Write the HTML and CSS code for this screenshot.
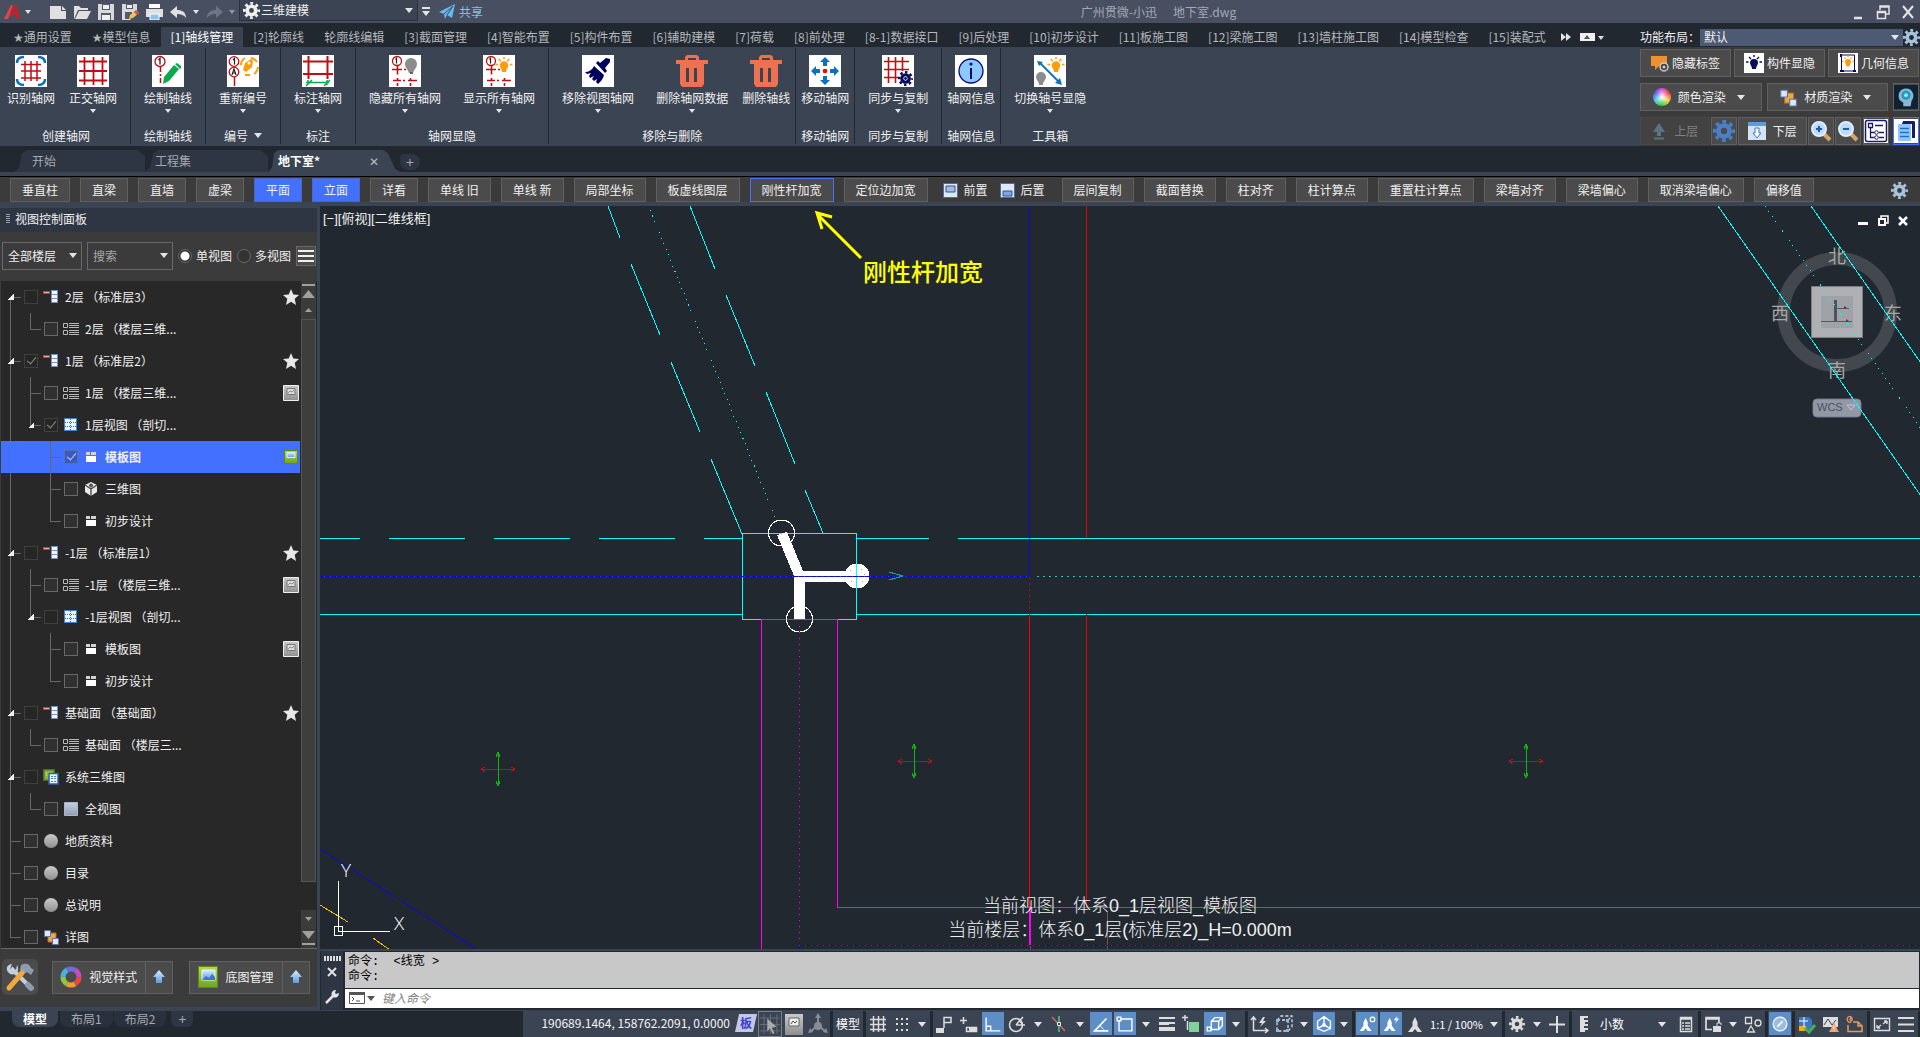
FILE: index.html
```html
<!DOCTYPE html>
<html lang="zh-CN">
<head>
    <meta charset="UTF-8">
    <meta name="viewport" content="width=device-width, initial-scale=1.0">
    <title>地下室.dwg</title>
    <link rel="stylesheet" href="styles.css">
</head>
<body>
    <!-- Shared icons -->
    <svg class="sprite" width="0" height="0" aria-hidden="true">
        <defs>
            <linearGradient id="silver" x1="0" y1="0" x2="0" y2="1"><stop offset="0" stop-color="#c9c9c9"/><stop offset="1" stop-color="#8f8f8f"/></linearGradient>
            <linearGradient id="sky" x1="0" y1="0" x2="0" y2="1"><stop offset="0" stop-color="#d8ecff"/><stop offset="1" stop-color="#5b9be0"/></linearGradient>
            <linearGradient id="leaf" x1="0" y1="0" x2="0" y2="1"><stop offset="0" stop-color="#b5d94c"/><stop offset="1" stop-color="#6fa51c"/></linearGradient>
            <linearGradient id="pane" x1="0" y1="0" x2="0" y2="1"><stop offset="0" stop-color="#c4cfdf"/><stop offset="1" stop-color="#8f9db5"/></linearGradient>
        </defs>
        <symbol id="gear" viewBox="0 0 16 16">
            <circle cx="8" cy="8" r="4" fill="none" stroke="currentColor" stroke-width="3.4"/>
            <circle cx="8" cy="8" r="6.7" fill="none" stroke="currentColor" stroke-width="2.6" stroke-dasharray="2.63" stroke-dashoffset="1.3"/>
        </symbol>
        <symbol id="floor" viewBox="0 0 16 16">
            <path d="M0 2h7v3H0z" fill="#c43f30"/><path d="M1 3h5v1H1z" fill="#f0b0a0"/>
            <path d="M8 1h7v13H8z" fill="#7d8db5"/><path d="M9 2h5v3H9zM9 6h5v3H9zM9 10h5v3H9z" fill="#f4f7ff"/>
        </symbol>
        <symbol id="list" viewBox="0 0 16 16">
            <path d="M.5 2.500h4v4h-4zM.5 9.500h4v4h-4z" fill="none" stroke="#b8b8b8"/>
            <path d="M6 2.500h10M6 4.500h10M6 6.500h10M6 9.500h10M6 11.500h10M6 13.500h10" stroke="#b8b8b8"/>
        </symbol>
        <symbol id="views" viewBox="0 0 16 16">
            <path d="M1 1h13v13H1z" fill="#3f7fd6"/><path d="M2 2h11v11H2z" fill="#eef5ff"/>
            <path d="M7.500 2v11M2 5.500h11M2 9.500h11" stroke="#2c6ac4" stroke-dasharray="1 1"/>
        </symbol>
        <symbol id="plan" viewBox="0 0 16 16">
            <path d="M3 3h4v3H3zM8 3h5v3H8z" fill="#d2d2d2"/><path d="M3 7h10v6H3z" fill="#fff"/>
        </symbol>
        <symbol id="cube" viewBox="0 0 16 16">
            <path d="M8 1l6 3v7l-6 4-6-4V4z" fill="#e8e8e8"/><path d="M8 8l6-4M8 8L2 4M8 8v7" stroke="#444" stroke-width="1.300"/><circle cx="8" cy="4.500" r="2" fill="#555"/>
        </symbol>
        <symbol id="sheets" viewBox="0 0 16 16">
            <path d="M1 1h10v10H1z" fill="#8fb044" stroke="#5f8a26" stroke-width="1.500"/>
            <path d="M3 4h6M3 6h4" stroke="#e0edb0" stroke-dasharray="1 1"/>
            <path d="M6 4.500h9V15H6z" fill="#eaf3ff" stroke="#2c62a8" stroke-width="1.500"/>
            <path d="M8 7.500h6M8 9.500h6M8 12.500h6" stroke="#4a80c8" stroke-width="1.200" stroke-dasharray="2 1"/>
        </symbol>
        <symbol id="pane-icon" viewBox="0 0 16 16"><path d="M1.500 1.500h13v13h-13z" fill="url(#pane)" stroke="#aab7cb"/></symbol>
        <symbol id="ball" viewBox="0 0 16 16"><circle cx="8" cy="8" r="7" fill="url(#silver)"/></symbol>
        <symbol id="blocks" viewBox="0 0 16 16">
            <path d="M5 4h8v9H5z" fill="#eda843" stroke="#b06e1a"/>
            <path d="M1.500 1.500h6v6h-6zM9.500 9.500h6v6h-6z" fill="#dfe8fa" stroke="#5c74aa"/>
        </symbol>
        <symbol id="star" viewBox="0 0 16 16"><path d="M8 0l2.300 5.400L16 6l-4.300 3.800L13 16l-5-3.300L3 16l1.300-6.200L0 6l5.700-.6z" fill="#e8e8e8"/></symbol>
        <symbol id="frame" viewBox="0 0 16 16">
            <path d="M.5.5h15v15H.5z" fill="url(#silver)" stroke="#eee"/><path d="M4 3.500h8v6H4z" fill="#ddd" stroke="#777"/><path d="M5 8l2-2 2 1 2-2" fill="none" stroke="#888"/>
        </symbol>
        <symbol id="frame-on" viewBox="0 0 16 16">
            <path d="M1.500 1.500h13v13h-13z" fill="url(#leaf)" stroke="#5c8c14"/><path d="M4 3.500h8v5H4z" fill="url(#sky)" stroke="#dfeeff"/>
        </symbol>
        <symbol id="up" viewBox="0 0 16 16"><path d="M8 1l6 7h-3v6H5V8H2z" fill="url(#sky)"/></symbol>
        <symbol id="bulb" viewBox="0 0 16 16">
            <path d="M8 4a4 4 0 0 1 4 4c0 2-2 3-2 6H6c0-3-2-4-2-6a4 4 0 0 1 4-4z" fill="currentColor"/>
            <path d="M8 0v2M3 2l2 2M13 2l-2 2M0 7h2.500M16 7h-2.500" stroke="currentColor" stroke-width="1.400"/>
        </symbol>
        <symbol id="grid32" viewBox="0 0 32 32">
            <path d="M2 6.500h28M2 16h28M2 25.500h28M7.500 2v28M16.500 2v28M25.500 2v28" stroke="#c00f14" stroke-width="1.800"/>
        </symbol>
        <symbol id="trash" viewBox="0 0 32 32">
            <path d="M0 5h9V2l2-2h10l2 2v3h9v4H0zM12 3v2h8V3zM4 9h24v20l-2 3H6l-2-3zm6 4v14h3V13zm8 0v14h3V13z" fill="#ee7152" fill-rule="evenodd"/>
        </symbol>
        <symbol id="axis" viewBox="0 0 32 32">
            <circle cx="8" cy="6" r="4.500" fill="#fff" stroke="#c00f14" stroke-width="1.300"/>
            <path d="M7.500 8.500V3.500L6.500 4.500" stroke="#222" fill="none" stroke-width="1.200"/>
            <path d="M8.500 10.500v9M3 14.500h10M15 14.500h2M19 14.500h2M4 25.500h8M14 25.500h2M19 25.500h9M8.500 23v3M8.500 28v3M21.500 23v3M21.500 28v3" stroke="#c00f14" stroke-width="1.600"/>
        </symbol>
        <symbol id="annot" viewBox="0 0 16 16">
            <path d="M8 0l2.500 5v4l4.500 6h-4.500L8 12l-2.500 3H1l4.500-6V5z" fill="currentColor"/>
        </symbol>
    </svg>

    <!-- Title bar -->
    <header class="titlebar">
        <nav class="quick" aria-label="快速访问">
            <button class="logo" aria-label="应用程序"><svg width="17" height="18" viewBox="0 0 17 18"><path d="M0 16L7 2h6l3 13-4 1-1-4H7l-3 4z" fill="#b5282c"/><path d="M8 9h3l-1-4z" fill="#474f61"/><path d="M0 16L7 2h2L4 16z" fill="#d8484c"/></svg></button>
            <button class="caret" aria-label="菜单"></button>
            <button class="q" aria-label="新建"><svg width="17" height="16" viewBox="0 0 17 16"><path d="M0 2h11v5h5v8H0zM12 2l4 4h-4z" fill="#e0e0e0"/></svg></button>
            <button class="q" aria-label="打开"><svg width="17" height="16" viewBox="0 0 17 16"><path d="M0 15V2h5l2 2h7v2H4L1 13z" fill="#e0e0e0"/><path d="M5 7h12l-4 8H1z" fill="#e0e0e0"/></svg></button>
            <button class="q" aria-label="保存"><svg width="17" height="16" viewBox="0 0 17 16"><path d="M0 0h16v16H0z" fill="#d9d9d9"/><path d="M4 0h8v6H4zM3 9h10v7H3z" fill="#535b6c"/><path d="M5 1h6v4H5zM4 11h8v5H4z" fill="#eee"/></svg></button>
            <button class="q" aria-label="另存为"><svg width="17" height="16" viewBox="0 0 17 16"><path d="M0 0h15v9l-7 7H0z" fill="#d9d9d9"/><path d="M4 0h7v5H4zM3 8h7v7H3z" fill="#535b6c"/><path d="M5 1h5v3H5z" fill="#eee"/><path d="M7 15l1-4 6-5 3 3-6 5z" fill="#e9c35c"/><path d="M14 6l3 3-2 2-3-3z" fill="#d05050"/></svg></button>
            <button class="q" aria-label="打印"><svg width="17" height="16" viewBox="0 0 17 16"><path d="M3 0h11v4H3z" fill="#fff"/><path d="M0 5h17v8H0z" fill="#e0e0e0"/><path d="M4 10h9v6H4z" fill="#8cc4f0" stroke="#fff"/></svg></button>
            <button class="q" aria-label="放弃"><svg width="17" height="16" viewBox="0 0 17 16"><path d="M0 8l7-6v4c5 0 9 2 9 8-2-3-5-4-9-4v4z" fill="#e0e0e0"/></svg></button>
            <button class="caret" aria-label="放弃列表"></button>
            <button class="q" aria-label="重做"><svg width="17" height="16" viewBox="0 0 17 16"><path d="M17 8l-7-6v4C5 6 1 8 1 14c2-3 5-4 9-4v4z" fill="#6d7584"/></svg></button>
            <button class="caret dim" aria-label="重做列表"></button>
        </nav>
        <label class="select workspace">
            <svg width="17" height="17"><use href="#gear"/></svg>
            <select aria-label="工作空间"><option>三维建模</option></select>
        </label>
        <button class="more" aria-label="自定义"><svg width="8" height="10" viewBox="0 0 8 10"><path d="M0 1h8" stroke="#e4e4e4" stroke-width="2"/><path d="M0 4h8l-4 5z" fill="#e4e4e4"/></svg></button>
        <a class="share" href="#"><svg width="16" height="15" viewBox="0 0 16 15"><path d="M0 8L16 0l-3 14-5-3-2 4-1-5z" fill="#6cb6ee"/><path d="M5 10l9-8-6 9" fill="none" stroke="#474f61"/></svg>共享</a>
        <div class="doc-title"><span>广州贯微-小迅</span><span>地下室.dwg</span></div>
        <div class="win-buttons">
            <button aria-label="最小化"><svg width="16" height="16" viewBox="0 0 16 16"><path d="M4 14h8" stroke="#e4e4e4" stroke-width="2.500"/></svg></button>
            <button aria-label="还原"><svg width="16" height="16" viewBox="0 0 16 16"><path d="M5 6V2h9v8h-3M5 3h9" stroke="#e4e4e4" stroke-width="1.500" fill="none"/><path d="M2.500 7.500h8v7h-8zM2 8.500h9" stroke="#e4e4e4" stroke-width="1.500" fill="none"/></svg></button>
            <button aria-label="关闭"><svg width="16" height="16" viewBox="0 0 16 16"><path d="M3 2l10 12M13 2L3 14" stroke="#e4e4e4" stroke-width="2"/></svg></button>
        </div>
    </header>

    <!-- Ribbon -->
    <div class="ribbon">
        <div class="ribbon-main">
            <nav class="tabs">
                <a href="#"><span class="st">★</span>通用设置</a>
                <a href="#"><span class="st">★</span>模型信息</a>
                <a href="#" class="active">[1]轴线管理</a>
                <a href="#">[2]轮廓线</a>
                <a href="#">轮廓线编辑</a>
                <a href="#">[3]截面管理</a>
                <a href="#">[4]智能布置</a>
                <a href="#">[5]构件布置</a>
                <a href="#">[6]辅助建模</a>
                <a href="#">[7]荷载</a>
                <a href="#">[8]前处理</a>
                <a href="#">[8-1]数据接口</a>
                <a href="#">[9]后处理</a>
                <a href="#">[10]初步设计</a>
                <a href="#">[11]板施工图</a>
                <a href="#">[12]梁施工图</a>
                <a href="#">[13]墙柱施工图</a>
                <a href="#">[14]模型检查</a>
                <a href="#">[15]装配式</a>
                <button class="tabs-more" aria-label="更多"><svg width="44" height="10" viewBox="0 0 44 10"><path d="M0 1l5 4-5 4zM5 1l5 4-5 4z" fill="#e4e4e4"/><path d="M19 1h15v8H19z" fill="#f0f0f0"/><path d="M23 7l3-4 3 4z" fill="#555"/><path d="M37 4h6l-3 4z" fill="#ddd"/></svg></button>
            </nav>
            <div class="groups">
                <section class="group">
                    <div class="tools">
                        <button class="tool"><svg width="32" height="32" viewBox="0 0 32 32"><path d="M0 0h32v32H0z" fill="#fff"/><path d="M2 8q0-6 7-6M23 2q7 0 7 6M2 24q0 6 7 6M23 30q7 0 7-6" fill="none" stroke="#0b6fc2" stroke-width="2.500"/><path d="M6 9.500h20M6 16h20M6 23h20M10 6v20M16 6v20M22 6v20" stroke="#c00f14" stroke-width="1.500"/></svg>识别轴网</button>
                        <button class="tool drop"><svg width="32" height="32" viewBox="0 0 32 32"><path d="M0 0h32v32H0z" fill="#fff"/><use href="#grid32"/></svg>正交轴网</button>
                    </div>
                    <h3>创建轴网</h3>
                </section>
                <section class="group">
                    <div class="tools">
                        <button class="tool drop"><svg width="32" height="32" viewBox="0 0 32 32"><path d="M0 0h32v32H0z" fill="#fff"/><circle cx="8" cy="6.500" r="5" fill="#fff" stroke="#c00f14" stroke-width="1.300"/><path d="M6.500 5L8 3.500V9.500" stroke="#222" fill="none" stroke-width="1.300"/><path d="M8.500 12v18" stroke="#c00f14" stroke-width="1.500" stroke-dasharray="5 2 2 2"/><path d="M11 29l1-7 10-12 5 4-10 12z" fill="#0ea84c"/><path d="M23 9l2-1 4 3v2l-1 1z" fill="#0ea84c"/></svg>绘制轴线</button>
                    </div>
                    <h3>绘制轴线</h3>
                </section>
                <section class="group">
                    <div class="tools">
                        <button class="tool drop"><svg width="32" height="32" viewBox="0 0 32 32"><path d="M0 0h32v32H0z" fill="#fff"/><circle cx="7" cy="6.500" r="4.800" fill="#fff" stroke="#c00f14" stroke-width="1.300"/><circle cx="7" cy="17" r="4.800" fill="#fff" stroke="#c00f14" stroke-width="1.300"/><path d="M6 5l1.500-1.500V9.500M5 20l2-6 2 6M5.500 18h3" fill="none" stroke="#222" stroke-width="1.200"/><path d="M7.500 22v9" stroke="#c00f14" stroke-width="1.500"/><path d="M16 15l2-7 6-4 2 2-1 6-6 5z" fill="#ff9c0a"/><path d="M14 10a8 8 0 0 1 4-7M24 3a9 9 0 0 1 6 4M31 12a9 9 0 0 1-4 7M23 20h-5" fill="none" stroke="#ff9c0a" stroke-width="2"/><circle cx="22" cy="8" r="1.500" fill="#fff"/></svg>重新编号</button>
                    </div>
                    <h3>编号 <i class="tri"></i></h3>
                </section>
                <section class="group">
                    <div class="tools">
                        <button class="tool drop"><svg width="32" height="32" viewBox="0 0 32 32"><path d="M0 0h32v32H0z" fill="#fff"/><path d="M1 6.500h30M1 19h30M6.500 1v23M25.500 1v23" stroke="#c00f14" stroke-width="2"/><path d="M4 27.500h23" stroke="#0ea84c" stroke-width="1.500"/><path d="M4 31l6-6M6 25v5M22 31l6-6M25 25v5" stroke="#0ea84c" stroke-width="1.500"/></svg>标注轴网</button>
                    </div>
                    <h3>标注</h3>
                </section>
                <section class="group">
                    <div class="tools">
                        <button class="tool drop"><svg width="32" height="32" viewBox="0 0 32 32"><path d="M0 0h32v32H0z" fill="#fff"/><use href="#axis"/><path d="M22 3a6 6 0 0 1 6 6c0 4-3 5-4 9h-4c-1-4-4-5-4-9a6 6 0 0 1 6-6z" fill="#8c8c8c"/><path d="M21 18h3" stroke="#666" stroke-width="2"/></svg>隐藏所有轴网</button>
                        <button class="tool drop"><svg width="32" height="32" viewBox="0 0 32 32"><path d="M0 0h32v32H0z" fill="#fff"/><use href="#axis"/><g color="#ff9c0a"><use href="#bulb" x="12" y="2" width="18" height="17"/></g></svg>显示所有轴网</button>
                    </div>
                    <h3>轴网显隐</h3>
                </section>
                <section class="group">
                    <div class="tools">
                        <button class="tool drop"><svg width="32" height="32" viewBox="0 0 32 32"><path d="M0 0h32v32H0z" fill="#fff"/><path d="M18 8l6-5 4 1v3l-5 6 2 3-2 2-9-10 2-2z" fill="#00005c"/><path d="M12 11l10 9c-1 4-3 6-6 9l-2-2 1-3-3 2-2-2 2-3-4 2-1-2 2-3-4 1-2-2c4 0 7-2 9-6z" fill="#00005c"/></svg>移除视图轴网</button>
                        <button class="tool drop"><svg width="32" height="32"><use href="#trash"/></svg>删除轴网数据</button>
                        <button class="tool"><svg width="32" height="32"><use href="#trash"/></svg>删除轴线</button>
                    </div>
                    <h3>移除与删除</h3>
                </section>
                <section class="group">
                    <div class="tools">
                        <button class="tool"><svg width="32" height="32" viewBox="0 0 32 32"><path d="M0 0h32v32H0z" fill="#fff"/><path d="M16 2l5 5h-3v4h-4V7h-3zM16 30l5-5h-3v-4h-4v4h-3zM2 16l5-5v3h4v4H7v3zM30 16l-5-5v3h-4v4h4v3z" fill="#0b6fc2"/><circle cx="16" cy="16" r="2.300" fill="#f00"/></svg>移动轴网</button>
                    </div>
                    <h3>移动轴网</h3>
                </section>
                <section class="group">
                    <div class="tools">
                        <button class="tool drop"><svg width="32" height="32" viewBox="0 0 32 32"><path d="M0 0h32v32H0z" fill="#fff"/><path d="M2 6.500h25M2 14.500h25M2 22.500h14M6.500 2v26M13.500 2v26M20.500 2v14" stroke="#c00f14" stroke-width="1.600"/><g color="#0b0b5c"><use href="#gear" x="16" y="16" width="15" height="15"/></g><circle cx="23.500" cy="23.500" r="1.400" fill="#0b0b5c"/></svg>同步与复制</button>
                    </div>
                    <h3>同步与复制</h3>
                </section>
                <section class="group">
                    <div class="tools">
                        <button class="tool"><svg width="32" height="32" viewBox="0 0 32 32"><path d="M0 0h32v32H0z" fill="#fff"/><circle cx="16" cy="16" r="12" fill="#8cc8fc" stroke="#0b0b7c" stroke-width="1.300"/><path d="M16 13v11" stroke="#0b0b5c" stroke-width="2"/><circle cx="16" cy="9" r="1.600" fill="#0b0b5c"/></svg>轴网信息</button>
                    </div>
                    <h3>轴网信息</h3>
                </section>
                <section class="group last">
                    <div class="tools">
                        <button class="tool drop"><svg width="32" height="32" viewBox="0 0 32 32"><path d="M0 0h32v32H0z" fill="#fff"/><path d="M6 8l20 20" stroke="#0b6fc2" stroke-width="1.800"/><path d="M3 6l6 1-4 4zM28 30l-7-2 5-5z" fill="#0b6fc2"/><g color="#ff9c0a"><use href="#bulb" x="13" y="2" width="18" height="17"/></g><path d="M7 17a5 5 0 0 1 5 5c0 3-3 4-3 8H5c0-4-3-5-3-8a5 5 0 0 1 5-5z" fill="#8c8c8c"/></svg>切换轴号显隐</button>
                    </div>
                    <h3>工具箱</h3>
                </section>
            </div>
        </div>

        <!-- Function layout panel -->
        <aside class="layout-panel">
            <div class="layout-head">
                <label for="layoutSelect">功能布局：</label>
                <span class="select"><select id="layoutSelect"><option>默认</option></select></span>
                <button class="bare steel" aria-label="布局设置"><svg width="17" height="17"><use href="#gear"/></svg></button>
            </div>
            <div class="layout-body">
                <div class="lrow">
                    <button><svg width="18" height="18" viewBox="0 0 18 18"><path d="M0 2h16v10H8l-4 4v-4H0z" fill="#f09030"/><circle cx="13" cy="13" r="4" fill="#444" stroke="#ccc" stroke-width="1.500"/><circle cx="13" cy="13" r="1.500" fill="#ccc"/></svg>隐藏标签</button>
                    <button><svg width="20" height="20" viewBox="0 0 20 20"><path d="M0 0h20v20H0z" fill="#fff"/><g color="#0b0b5c"><use href="#bulb" x="2" y="2" width="16" height="16"/></g></svg>构件显隐</button>
                    <button><svg width="20" height="20" viewBox="0 0 20 20"><path d="M0 0h20v20H0z" fill="#fff"/><path d="M3.500 2v16h13V2z" fill="none" stroke="#0b0b5c"/><path d="M2 18h4M15 18h3M3 1v3" stroke="#0b0b5c" stroke-width="2"/><g color="#ff9c0a"><use href="#bulb" x="4" y="3" width="12" height="12"/></g></svg>几何信息</button>
                </div>
                <div class="lrow wide">
                    <button class="drop"><i class="wheel"></i>颜色渲染</button>
                    <button class="drop"><svg width="18" height="19"><use href="#blocks"/></svg>材质渲染</button>
                    <button class="sq" aria-label="智能助手"><svg width="24" height="26" viewBox="0 0 26 26"><path d="M0 0h26v26H0z" fill="#0d2233"/><path d="M5 12a8 8 0 1 1 14 5l-1 6h-8v-4C7 18 5 16 5 12z" fill="#8fb6cc"/><circle cx="13" cy="11" r="5" fill="#1d9cc8"/><circle cx="13" cy="11" r="2" fill="#9df0ff"/></svg></button>
                </div>
                <div class="lrow tight">
                    <button class="lv off" disabled><svg width="16" height="18" viewBox="0 0 16 18"><path d="M8 1l6 9h-4v4H6v-4H2z" fill="#5c7480"/><path d="M3 16.500h10" stroke="#5c7480" stroke-width="2"/></svg>上层</button>
                    <button class="sq blue" aria-label="层设置"><svg width="22" height="22"><use href="#gear"/></svg></button>
                    <button class="lv"><svg width="18" height="18" viewBox="0 0 18 18"><path d="M0 0h18v18H0z" fill="#d4e4f6"/><path d="M0 0h18v4H0z" fill="#5b9be0"/><path d="M9 16l-4-5h2V6h4v5h2z" fill="#fff" stroke="#3f78c0"/></svg>下层</button>
                    <button class="sq" aria-label="放大"><svg width="22" height="22" viewBox="0 0 22 22"><path d="M14 14l6 6" stroke="#d8a468" stroke-width="4"/><circle cx="9" cy="9" r="7" fill="#b8dcff" stroke="#e4ecf4" stroke-width="2"/><path d="M9 6v6M6 9h6" stroke="#2456b0" stroke-width="2"/></svg></button>
                    <button class="sq" aria-label="缩小"><svg width="22" height="22" viewBox="0 0 22 22"><path d="M14 14l6 6" stroke="#d8a468" stroke-width="4"/><circle cx="9" cy="9" r="7" fill="#b8dcff" stroke="#e4ecf4" stroke-width="2"/><path d="M6 9h6" stroke="#2456b0" stroke-width="2"/></svg></button>
                    <button class="sq white" aria-label="树形"><svg width="24" height="24" viewBox="0 0 24 24"><path d="M0 0h24v24H0z" fill="#fff"/><rect x="1.500" y="1.500" width="21" height="21" rx="2" fill="none" stroke="#1a1a66" stroke-width="1.500"/><path d="M4.500 4.500h4v4h-4zM11 6.500h8M6.500 9v9.500h4M6.500 13.500h4M15 13.500h5M15 18.500h5" fill="none" stroke="#1a1a66" stroke-width="1.300"/><circle cx="12.500" cy="13.500" r="1.800" fill="none" stroke="#1a1a66"/><circle cx="12.500" cy="18.500" r="1.800" fill="none" stroke="#1a1a66"/></svg></button>
                    <button class="sq white on" aria-label="文档"><svg width="24" height="24" viewBox="0 0 24 24"><path d="M0 0h24v24H0z" fill="#fff"/><path d="M9 2h11l1 1v16h-3V5H8z" fill="#1a1a66"/><rect x="4" y="5" width="13" height="17" rx="1" fill="#8cc8fc"/><path d="M6 9.500h9M6 13.500h9M6 17.500h9" stroke="#1f6fc0" stroke-width="1.300"/></svg></button>
                </div>
            </div>
        </aside>
    </div>

    <!-- Open drawings -->
    <nav class="file-tabs">
        <a href="#" class="first">开始</a>
        <a href="#">工程集</a>
        <a href="#" class="active">地下室*<span class="x">✕</span></a>
        <button aria-label="新建图形">+</button>
    </nav>

    <!-- Component toolbar -->
    <div class="toolbar">
        <button>垂直柱</button>
        <button>直梁</button>
        <button>直墙</button>
        <button>虚梁</button>
        <button class="on">平面</button>
        <button class="on">立面</button>
        <button>详看</button>
        <button>单线 旧</button>
        <button>单线 新</button>
        <button>局部坐标</button>
        <button>板虚线图层</button>
        <button class="focus">刚性杆加宽</button>
        <button>定位边加宽</button>
        <div class="order">
            <button><svg width="15" height="15" viewBox="0 0 15 15"><path d="M.5.5h14v14H.5z" fill="#dfe8f8" stroke="#51699c"/><path d="M3 3h9v6H3z" fill="#a6bce0" stroke="#31548c"/></svg>前置</button>
            <button><svg width="15" height="15" viewBox="0 0 15 15"><path d="M.5.5h14v14H.5z" fill="#dfe8f8" stroke="#51699c"/><path d="M3 8h9v5H3z" fill="#7ea6e0" stroke="#31548c"/></svg>后置</button>
        </div>
        <button>层间复制</button>
        <button>截面替换</button>
        <button>柱对齐</button>
        <button>柱计算点</button>
        <button>重置柱计算点</button>
        <button>梁墙对齐</button>
        <button>梁墙偏心</button>
        <button>取消梁墙偏心</button>
        <button>偏移值</button>
        <button class="bare steel" aria-label="工具栏设置"><svg width="17" height="17"><use href="#gear"/></svg></button>
    </div>

    <main class="workspace-area">
        <!-- View control panel -->
        <aside class="side">
            <h2>视图控制面板</h2>
            <div class="filters">
                <span class="select floor"><select aria-label="楼层"><option>全部楼层</option></select></span>
                <span class="select search"><input type="text" aria-label="搜索" placeholder="搜索"></span>
                <label><input type="radio" name="viewMode" checked>单视图</label>
                <label><input type="radio" name="viewMode">多视图</label>
                <button class="burger" aria-label="菜单"></button>
            </div>
            <div class="tree-box">
                <ul class="tree">
                    <li>
                        <div class="row"><button class="exp" aria-label="折叠"></button><input type="checkbox" id="n1" class="faint"><svg><use href="#floor"/></svg><label for="n1">2层 （标准层3）</label><svg class="mark"><use href="#star"/></svg></div>
                        <ul>
                            <li><div class="row"><input type="checkbox" id="n2"><svg><use href="#list"/></svg><label for="n2">2层 （楼层三维...</label></div></li>
                        </ul>
                    </li>
                    <li>
                        <div class="row"><button class="exp" aria-label="折叠"></button><input type="checkbox" id="n3" class="faint" checked><svg><use href="#floor"/></svg><label for="n3">1层 （标准层2）</label><svg class="mark"><use href="#star"/></svg></div>
                        <ul>
                            <li><div class="row"><input type="checkbox" id="n4"><svg><use href="#list"/></svg><label for="n4">1层 （楼层三维...</label><svg class="mark"><use href="#frame"/></svg></div></li>
                            <li>
                                <div class="row"><button class="exp" aria-label="折叠"></button><input type="checkbox" id="n5" class="faint" checked><svg><use href="#views"/></svg><label for="n5">1层视图 （剖切...</label></div>
                                <ul>
                                    <li><div class="row selected"><input type="checkbox" id="n6" checked><svg><use href="#plan"/></svg><label for="n6">模板图</label><svg class="mark"><use href="#frame-on"/></svg></div></li>
                                    <li><div class="row"><input type="checkbox" id="n7"><svg><use href="#cube"/></svg><label for="n7">三维图</label></div></li>
                                    <li><div class="row"><input type="checkbox" id="n8"><svg><use href="#plan"/></svg><label for="n8">初步设计</label></div></li>
                                </ul>
                            </li>
                        </ul>
                    </li>
                    <li>
                        <div class="row"><button class="exp" aria-label="折叠"></button><input type="checkbox" id="n9" class="faint"><svg><use href="#floor"/></svg><label for="n9">-1层 （标准层1）</label><svg class="mark"><use href="#star"/></svg></div>
                        <ul>
                            <li><div class="row"><input type="checkbox" id="n10"><svg><use href="#list"/></svg><label for="n10">-1层 （楼层三维...</label><svg class="mark"><use href="#frame"/></svg></div></li>
                            <li>
                                <div class="row"><button class="exp" aria-label="折叠"></button><input type="checkbox" id="n11" class="faint"><svg><use href="#views"/></svg><label for="n11">-1层视图 （剖切...</label></div>
                                <ul>
                                    <li><div class="row"><input type="checkbox" id="n12"><svg><use href="#plan"/></svg><label for="n12">模板图</label><svg class="mark"><use href="#frame"/></svg></div></li>
                                    <li><div class="row"><input type="checkbox" id="n13"><svg><use href="#plan"/></svg><label for="n13">初步设计</label></div></li>
                                </ul>
                            </li>
                        </ul>
                    </li>
                    <li>
                        <div class="row"><button class="exp" aria-label="折叠"></button><input type="checkbox" id="n14" class="faint"><svg><use href="#floor"/></svg><label for="n14">基础面 （基础面）</label><svg class="mark"><use href="#star"/></svg></div>
                        <ul>
                            <li><div class="row"><input type="checkbox" id="n15"><svg><use href="#list"/></svg><label for="n15">基础面 （楼层三...</label></div></li>
                        </ul>
                    </li>
                    <li>
                        <div class="row"><button class="exp" aria-label="折叠"></button><input type="checkbox" id="n16" class="faint"><svg><use href="#sheets"/></svg><label for="n16">系统三维图</label></div>
                        <ul>
                            <li><div class="row"><input type="checkbox" id="n17"><svg><use href="#pane-icon"/></svg><label for="n17">全视图</label></div></li>
                        </ul>
                    </li>
                    <li><div class="row"><input type="checkbox" id="n18"><svg><use href="#ball"/></svg><label for="n18">地质资料</label></div></li>
                    <li><div class="row"><input type="checkbox" id="n19"><svg><use href="#ball"/></svg><label for="n19">目录</label></div></li>
                    <li><div class="row"><input type="checkbox" id="n20"><svg><use href="#ball"/></svg><label for="n20">总说明</label></div></li>
                    <li><div class="row"><input type="checkbox" id="n21"><svg><use href="#blocks"/></svg><label for="n21">详图</label></div></li>
                </ul>
                <div class="scroll">
                    <svg width="15" height="38" viewBox="0 0 15 38"><path d="M1 4h13" stroke="#a0a0a0" stroke-width="2"/><path d="M1 17l6.500-8 6.500 8zM4 31l3.500-4 3.500 4z" fill="#a0a0a0"/></svg>
                    <div class="thumb"></div>
                    <svg width="15" height="38" viewBox="0 0 15 38"><path d="M1 34h13" stroke="#a0a0a0" stroke-width="2"/><path d="M1 21l6.500 8 6.500-8zM4 7l3.500 4 3.500-4z" fill="#a0a0a0"/></svg>
                </div>
            </div>
            <div class="side-foot">
                <button class="wrench" aria-label="工具"><svg width="32" height="32" viewBox="0 0 32 32"><path d="M7 7l18 18" stroke="#c4cede" stroke-width="4"/><path d="M3 6a6 6 0 0 0 8 7 6 6 0 0 0 2-9l-1 5-4 1-2-2 2-5a6 6 0 0 0-5 3z" fill="#c4cede"/><path d="M17 4c6-3 9 0 10 3l3 2-3 5-4-3-3 2-4-4z" fill="#8e9cb0"/><path d="M18 12L5 27" stroke="#f0a840" stroke-width="5" stroke-linecap="round"/><path d="M24 24l3 3" stroke="#8e9cb0" stroke-width="6" stroke-linecap="round"/></svg></button>
                <div class="split">
                    <button><svg width="22" height="22" viewBox="0 0 22 22"><g fill="none" stroke-width="5"><circle cx="11" cy="11" r="8" stroke="#e8483c" stroke-dasharray="8.400 41.900"/><circle cx="11" cy="11" r="8" stroke="#f29a38" stroke-dasharray="8.400 41.900" stroke-dashoffset="-8.400"/><circle cx="11" cy="11" r="8" stroke="#8cc83c" stroke-dasharray="8.400 41.900" stroke-dashoffset="-16.800"/><circle cx="11" cy="11" r="8" stroke="#4cb0e0" stroke-dasharray="8.400 41.900" stroke-dashoffset="-25.100"/><circle cx="11" cy="11" r="8" stroke="#6c6ce0" stroke-dasharray="8.400 41.900" stroke-dashoffset="-33.500"/><circle cx="11" cy="11" r="8" stroke="#c050c0" stroke-dasharray="8.400 41.900" stroke-dashoffset="-41.900"/></g></svg>视觉样式</button>
                    <button class="up" aria-label="展开"><svg width="16" height="16"><use href="#up"/></svg></button>
                </div>
                <div class="split">
                    <button><svg width="20" height="22" viewBox="0 0 20 22"><path d="M.5.5h19v21H.5z" fill="url(#leaf)" stroke="#5c8c14"/><path d="M4 4h13v10H4z" fill="url(#sky)" stroke="#eef6ff"/><path d="M4 14l4-4 3 2 3-4 3 3v3z" fill="#3f78c0"/></svg>底图管理</button>
                    <button class="up" aria-label="展开"><svg width="16" height="16"><use href="#up"/></svg></button>
                </div>
            </div>
        </aside>

        <div class="stage">
            <div class="viewport">
                <!-- View cube -->
                <svg class="cube" width="160" height="240" viewBox="0 0 160 240">
                    <circle cx="77" cy="106" r="53.500" fill="none" stroke="#43484f" stroke-width="13"/>
                    <path d="M51.500 80.500h51v51h-51z" fill="#aeb0b3" stroke="#7d7f7c"/>
                    <path d="M61 90h32v32H61z" fill="#9fa3a8"/>
                    <path d="M75.500 94v21" stroke="#50545a" stroke-width="3"/>
                    <path d="M61 115.500h31M77 102.500h12" stroke="#565a60"/>
                    <path d="M89 115l-3-2v3zM87 102l-3-2v3z" fill="#444"/>
                    <g class="compass"><text x="77" y="57">北</text><text x="77" y="171">南</text><text x="20" y="114">西</text><text x="133" y="114">东</text></g>
                    <rect x="53" y="193" width="48" height="18" rx="4" fill="#9298a6" stroke="#747b89"/>
                    <text class="wcs" x="57" y="205">WCS</text>
                    <path d="M87 199h8l-4 5z" fill="none" stroke="#c4c8d0"/>
                </svg>

                <!-- Drawing, in window coordinates -->
                <svg class="drawing" width="100%" height="100%">
                    <g transform="translate(-320 -206)" fill="none" stroke-width="1" shape-rendering="crispEdges">
                        <g stroke="#0ff">
                            <path d="M608 206L620 238M631 264L660 335M671 362L700 432M711 459L742 534"/>
                            <path d="M690 206L715 269M726 295L755 366M766 392L795 464M805 490L823 533"/>
                            <path d="M650 210L779 527" stroke-dasharray="1 5"/>
                            <path d="M320 538.500h40M389 538.500h76M494 538.500h76M599 538.500h76M704 538.500h38M856 538.500h73M958 538.500h4000"/>
                            <path d="M320 614.500h422M856 614.500h4000"/>
                            <path d="M742.500 533.500h114v86h-114z"/>
                            <path d="M1718 206l404 577M1811 206l404 577"/>
                            <path d="M1765 206l404 577" stroke-dasharray="1 5"/>
                        </g>
                        <path d="M1037 576.500h3000" stroke="#2cc0c0" stroke-dasharray="2 4"/>
                        <path d="M1086.500 206v332M1086.500 614v293" stroke="#d80808"/>
                        <path d="M1029.500 614v294" stroke="#f00"/>
                        <path d="M1029.500 577v37" stroke="#c00a0a" stroke-dasharray="2 4"/>
                        <path d="M1030.500 945v5M1107.500 912v38" stroke="#7a5050"/>
                        <g stroke="#f0f">
                            <path d="M761.500 950V619.500h76V907.500h4000"/>
                            <path d="M799.500 626v314" stroke-dasharray="1 5"/>
                            <path d="M1029.500 908v38" stroke-width="2"/>
                        </g>
                        <path d="M777 535l10-3 16 39h44v11h-42v37h-11v-43z" fill="#fff"/>
                        <circle cx="857" cy="576" r="12.500" fill="#fff"/>
                        <circle cx="857" cy="576" r="8" stroke="#f08080" stroke-dasharray="1 5"/>
                        <circle cx="781.500" cy="533" r="13" stroke="#fff"/>
                        <circle cx="799.500" cy="619" r="13" stroke="#fff"/>
                        <path d="M856.500 560v34" stroke="#0ff"/>
                        <g stroke="#0c0cc8">
                            <path d="M320 576.500h709"/>
                            <path d="M1029.500 206v370M799.500 950v-4.500h4000"/>
                            <path d="M320 849L478 950"/>
                        </g>
                        <path d="M324 576.500h705M799 945.500h4000" stroke="#3070ff" stroke-dasharray="1 5" opacity=".6"/>
                        <path d="M889 572l14 4-14 4" stroke="#1c9c9c"/>
                        <path d="M320 905l28 17M373 938l17 12" stroke="#ffc000"/>
                        <path d="M481 769.500h34M485 767l-4 2 4 3M511 767l4 2-4 3M898 761.500h34M902 759l-4 2 4 3M928 759l4 2-4 3M1509 761.500h34M1513 759l-4 2 4 3M1539 759l4 2-4 3" stroke="#c80c0c"/>
                        <path d="M498.500 752v34M496 757l2-5 2 5M496 781l2 5 2-5M914.500 744v34M912 749l2-5 2 5M912 773l2 5 2-5M1526.500 744v34M1524 749l2-5 2 5M1524 773l2 5 2-5" stroke="#0cb80c"/>
                        <path d="M338.500 881v50.500h51M334.500 926.500h8v9h-8z" stroke="#fff"/>
                        <g class="ucs"><text x="399" y="930">X</text><text x="346" y="877">Y</text></g>
                        <path d="M861 258L817 214M832 217l-15-4 5 16" stroke="#ff0" stroke-width="3" shape-rendering="auto"/>
                        <text class="note" x="863" y="281">刚性杆加宽</text>
                    </g>
                </svg>

                <div class="view-label">[−][俯视][二维线框]</div>
                <div class="view-buttons">
                    <button aria-label="最小化视口"><svg width="14" height="14" viewBox="0 0 14 14"><path d="M2 9.500h10" stroke="#fff" stroke-width="3"/></svg></button>
                    <button aria-label="还原视口"><svg width="14" height="14" viewBox="0 0 14 14"><path d="M5 4V2h7v7h-2" fill="none" stroke="#fff" stroke-width="1.500"/><path d="M3 5h6v6H3z" fill="none" stroke="#fff" stroke-width="2"/></svg></button>
                    <button aria-label="关闭视口"><svg width="14" height="14" viewBox="0 0 14 14"><path d="M3 3l8 8M11 3l-8 8" stroke="#fff" stroke-width="2.500"/></svg></button>
                </div>
                <div class="view-info">
                    <p>当前视图：体系0_1层视图_模板图</p>
                    <p>当前楼层：体系0_1层(标准层2)_H=0.000m</p>
                </div>
            </div>

            <!-- Command line -->
            <div class="command">
                <div class="cmd-side">
                    <i class="grip"></i>
                    <button class="close" aria-label="关闭命令行"><svg width="12" height="12" viewBox="0 0 12 12"><path d="M2 2l8 8M10 2l-8 8" stroke="#e4e4e4" stroke-width="2"/></svg></button>
                    <button aria-label="自定义"><svg width="16" height="16" viewBox="0 0 16 16"><path d="M2 14l7-7" stroke="#e4e4e4" stroke-width="2.500"/><path d="M15 4l-3 1-1-1 1-3a4 4 0 0 0-4 6l1 1a4 4 0 0 0 6-4z" fill="#e4e4e4"/></svg></button>
                </div>
                <div class="cmd-main">
                    <pre>命令:  &lt;线宽 &gt;
命令:</pre>
                    <div class="cmd-input">
                        <svg width="27" height="12" viewBox="0 0 27 12"><path d="M.5.5h15v11H.5z" fill="#fff" stroke="#555"/><path d="M0 0h16v3H0z" fill="#555"/><path d="M3 5l2 2-2 2M7 9h4" fill="none" stroke="#555"/><path d="M18 4h8l-4 5z" fill="#555"/></svg>
                        <input type="text" aria-label="命令" placeholder="键入命令">
                    </div>
                </div>
            </div>
        </div>
    </main>

    <!-- Status bar -->
    <footer class="status">
        <nav class="model-tabs">
            <a href="#" class="active">模型</a>
            <a href="#">布局1</a>
            <a href="#">布局2</a>
            <button aria-label="新建布局">+</button>
        </nav>
        <div class="sg">
            <span class="coords">190689.1464, 158762.2091, 0.0000</span>
            <button class="slab" aria-label="板">板</button>
            <button class="cell" aria-label="选择栅格"><svg viewBox="0 0 24 24"><path d="M1 5.500h22M1 12.500h22M1 19.500h22M5.500 1v22M12.500 1v22M19.500 1v22" stroke="#6a7078"/><path d="M9 6l10 9-5 1 3 6-2 1-3-6-3 3z" fill="#aaa"/></svg></button>
            <button aria-label="图像"><svg viewBox="0 0 24 24"><path d="M3 2h18v21H3z" fill="url(#silver)"/><path d="M7 6h10v8H7z" fill="#eee" stroke="#666"/><path d="M9 12l2-3 2 2 2-2" fill="none" stroke="#555"/></svg></button>
            <button aria-label="坐标系"><svg viewBox="0 0 24 24"><path d="M12 3v10L4 20M12 13l8 7" stroke="#888d94" stroke-width="2" fill="none"/><circle cx="12" cy="14" r="4" fill="#888d94"/><path d="M12 1l3 5H9zM2 21l2-5 3 4zM22 21l-2-5-3 4z" fill="#888d94"/></svg></button>
        </div>
        <div class="sg"><button class="txt">模型</button></div>
        <div class="sg">
            <button aria-label="栅格"><svg viewBox="0 0 24 24"><path d="M4 7.500h16M4 12.500h16M4 17.500h16M7.500 4v16M12.500 4v16M17.500 4v16" stroke="#ddd" stroke-width="1.500"/></svg></button>
            <button aria-label="捕捉"><svg viewBox="0 0 24 24"><path d="M6 7h13M6 12h13M6 18h13" stroke="#ddd" stroke-width="2" stroke-dasharray="2 3"/></svg></button>
            <button class="caret" aria-label="捕捉选项"></button>
        </div>
        <div class="sg drafting">
            <button aria-label="推断约束"><svg viewBox="0 0 24 24"><path d="M3 16h8v5H3z" fill="#ddd"/><path d="M11 16V5.500h7v5h-7" fill="none" stroke="#ddd" stroke-width="1.500"/></svg></button>
            <button aria-label="动态输入"><svg viewBox="0 0 24 24"><path d="M3 8.500h7M6.500 5v7M9.500 15.500h10v4h-10z" fill="none" stroke="#ddd" stroke-width="1.500"/><path d="M12 15h8v5h-8z" fill="#ddd"/></svg></button>
            <button class="on" aria-label="正交"><svg viewBox="0 0 24 24"><path d="M4.500 5v14.500H20M4.500 14.500h5v5" fill="none" stroke="#fff" stroke-width="1.500"/></svg></button>
            <button aria-label="极轴"><svg viewBox="0 0 24 24"><circle cx="11" cy="13" r="6.500" fill="none" stroke="#ddd" stroke-width="1.500"/><path d="M11 13h9M11 13l7-8M14 7l3 5" stroke="#ddd" stroke-width="1.500" fill="none"/></svg></button>
            <button class="caret" aria-label="极轴选项"></button>
            <button aria-label="等轴测"><svg viewBox="0 0 24 24"><path d="M12 4v16" stroke="#50c878" stroke-width="1.500"/><path d="M5 5l13 14" stroke="#d86464" stroke-width="1.500"/><path d="M10.500 10.500h3v3h-3z" fill="#3b4453" stroke="#eee"/></svg></button>
            <button class="caret" aria-label="等轴测选项"></button>
            <button class="on" aria-label="对象追踪"><svg viewBox="0 0 24 24"><path d="M20 19.500H5L18 6" fill="none" stroke="#fff" stroke-width="1.800"/><path d="M10 13l5 5" stroke="#fff"/></svg></button>
            <button class="on" aria-label="对象捕捉"><svg viewBox="0 0 24 24"><path d="M5.500 6.500h14v13h-14z" fill="none" stroke="#fff" stroke-width="1.500"/><path d="M3.500 4.500h4v4h-4z" fill="#5d8fc6" stroke="#fff" stroke-width="1.500"/></svg></button>
            <button class="caret" aria-label="捕捉选项"></button>
            <button aria-label="线宽"><svg viewBox="0 0 24 24"><path d="M4 6h16M4 11h16" stroke="#ddd" stroke-width="2"/><path d="M4 10h10v3H4zM4 15h16v4H4z" fill="#ddd"/></svg></button>
            <button aria-label="选择循环"><svg viewBox="0 0 24 24"><path d="M3 5.500h6M6 3v6M8.500 9V18" stroke="#ddd" stroke-width="1.500"/><path d="M10 10h10v10H10z" fill="#7cd49a"/></svg></button>
            <button class="on" aria-label="三维捕捉"><svg viewBox="0 0 24 24"><path d="M8 9l4-4h8v9l-4 4H8zM8 9h8v9M16 9l4-4" fill="none" stroke="#fff" stroke-width="1.500"/><path d="M3.500 15.500h4v4h-4z" fill="#5d8fc6" stroke="#fff" stroke-width="1.500"/></svg></button>
            <button class="caret" aria-label="三维捕捉选项"></button>
        </div>
        <div class="sg">
            <button aria-label="动态 UCS"><svg viewBox="0 0 24 24"><path d="M5.500 19V6M3 8l2.500-3L8 8M5 18.500h14M17 16l3 2.500-3 2.500" fill="none" stroke="#ddd" stroke-width="1.500"/><path d="M15 5l-4 6h3l-2 4 6-6h-3l2-4z" fill="#ddd"/></svg></button>
            <button aria-label="选择过滤"><svg viewBox="0 0 24 24"><path d="M5 8l4-4h11v11l-4 4H5zM16 8v11M16 8l4-4M5 8h11" fill="none" stroke="#ddd" stroke-width="1.300" stroke-dasharray="3 2"/><path d="M4 7h3v3H4zM14 7h3v3h-3zM4 17h3v3H4zM14 17h3v3h-3z" fill="#7cc0f0"/></svg></button>
            <button class="caret" aria-label="过滤选项"></button>
            <button class="on" aria-label="小控件"><svg viewBox="0 0 24 24"><path d="M12 4l7 5v8l-7 3-7-3V9z M12 4v9M12 13l7 4M12 13l-7 4" fill="none" stroke="#fff" stroke-width="1.500"/><circle cx="12" cy="13" r="2" fill="#fff"/></svg></button>
            <button class="caret" aria-label="小控件选项"></button>
        </div>
        <div class="sg">
            <button class="on" aria-label="注释可见性"><svg viewBox="0 0 24 24"><use href="#annot" x="3" y="5" width="15" height="16"/><circle cx="18" cy="7" r="2.500" fill="none" stroke="#fff" stroke-width="1.300"/></svg></button>
            <button class="on" aria-label="自动缩放"><svg viewBox="0 0 24 24"><use href="#annot" x="3" y="5" width="15" height="16"/><path d="M19 3l-4 5h3l-2 4 5-6h-3z" fill="#fff"/></svg></button>
            <button aria-label="注释"><svg viewBox="0 0 24 24"><use href="#annot" x="4" y="5" width="16" height="16"/></svg></button>
            <button class="txt scale">1:1 / 100%</button>
            <button class="caret" aria-label="比例列表"></button>
        </div>
        <div class="sg">
            <button aria-label="工作空间"><svg viewBox="0 0 24 24"><use href="#gear" x="4" y="4" width="16" height="16"/></svg></button>
            <button class="caret" aria-label="工作空间列表"></button>
            <button aria-label="注释监视器"><svg viewBox="0 0 24 24"><path d="M4 12.500h16M12 4v17" stroke="#ddd" stroke-width="2"/></svg></button>
        </div>
        <div class="sg">
            <button aria-label="单位"><svg viewBox="0 0 24 24"><path d="M8 4h8v2h-4v2h4v2h-3v2h3v2h-4v2h4v2h-3v2H8z" fill="#ddd"/></svg></button>
            <span class="select units"><select aria-label="单位类型"><option>小数</option></select></span>
            <button aria-label="快捷特性"><svg viewBox="0 0 24 24"><path d="M6.500 5.500h11v14h-11zM6 7h12M8 11h2M11 11h5M8 14h2M11 14h5M8 17h2M11 17h5" fill="none" stroke="#ddd" stroke-width="1.500"/></svg></button>
        </div>
        <div class="sg">
            <button aria-label="锁定界面"><svg viewBox="0 0 24 24"><path d="M18 11V5.500H5v12h6M5 7h13" fill="none" stroke="#ddd" stroke-width="1.700"/><path d="M12 14h8v6h-8z" fill="#ddd"/><path d="M16 14v-3h4v2" fill="none" stroke="#ddd"/></svg></button>
            <button class="caret" aria-label="锁定选项"></button>
            <button aria-label="隔离对象"><svg viewBox="0 0 24 24"><path d="M4.500 5.500h6v6h-6zM10 14l3.500 6h-7z" fill="none" stroke="#ddd" stroke-width="1.300"/><circle cx="17" cy="11" r="3" fill="none" stroke="#ddd" stroke-width="1.300"/></svg></button>
        </div>
        <div class="sg"><button class="on" aria-label="性能"><svg viewBox="0 0 24 24"><circle cx="12" cy="12" r="7.500" fill="#9cbce0" stroke="#fff" stroke-width="1.300"/><path d="M9 15l6-6" stroke="#fff" stroke-width="1.800"/></svg></button></div>
        <div class="sg">
            <button aria-label="图形校验"><svg viewBox="0 0 24 24"><path d="M4 5h10l3 3v9H4z" fill="#3b78c4"/><path d="M4 14h7v5H4z" fill="#e8b020"/><path d="M9 5v10M4 9h9" stroke="#fff"/><path d="M10 16l4 4 6-7" fill="none" stroke="#40b050" stroke-width="3"/></svg></button>
            <button aria-label="外部参照"><svg viewBox="0 0 24 24"><path d="M4 5h15v10H4z" fill="#ddd"/><path d="M5 13l4-6 4 6 4-5" fill="none" stroke="#3b4453"/><path d="M15 11l5 9H10z" fill="#f0a070"/><path d="M15 14v3M15 18v1" stroke="#fff"/></svg></button>
            <button aria-label="参照通知"><svg viewBox="0 0 24 24"><path d="M5 13v6.500h14V14l-4-4h-5M15 10v4h4" fill="none" stroke="#e8965c" stroke-width="1.500"/><path d="M8 10a2.500 3 0 1 1 1-4v3M8 6a1 1.500 0 1 0 .1 0" fill="none" stroke="#e8965c" stroke-width="1.300"/></svg></button>
        </div>
        <div class="sg">
            <button aria-label="全屏"><svg viewBox="0 0 24 24"><path d="M4.500 6.500h15v12h-15zM7 16l4-3M7 16v-3M7 16h3M17 9l-4 3M17 9v3M17 9h-3" fill="none" stroke="#ddd" stroke-width="1.400"/></svg></button>
            <button aria-label="自定义"><svg viewBox="0 0 24 24"><path d="M4 6h16M4 12.500h16M4 19h16" stroke="#ddd" stroke-width="2"/></svg></button>
        </div>
    </footer>
</body>
</html>
```
FILE: styles.css
```css
* {
    box-sizing: border-box;
}

body {
    margin: 0;
    height: 100vh;
    display: flex;
    flex-direction: column;
    overflow: hidden;
    background: #222830;
    color: #f0f0f0;
    font-family: "Noto Sans CJK SC", sans-serif;
    font-size: 12px;
    line-height: 16px;
}

button, select, input {
    font: inherit;
    color: inherit;
    margin: 0;
}

button {
    display: flex;
    align-items: center;
    justify-content: center;
    padding: 0;
    border: none;
    background: none;
    white-space: nowrap;
    cursor: pointer;
}

a {
    color: inherit;
    text-decoration: none;
    white-space: nowrap;
}

svg {
    display: block;
    flex: none;
}

.sprite {
    position: absolute;
}

h2, h3, p, pre, ul {
    margin: 0;
    padding: 0;
    font-size: 12px;
    font-weight: normal;
}

/* small down arrow */
.caret::after, .drop::after, .tri, .select::after {
    content: "";
    flex: none;
    border: 4px solid transparent;
    border-top: 5px solid #e4e4e4;
    border-bottom: 0;
}

.tri {
    margin-left: 6px;
}

.select {
    display: flex;
    align-items: center;
    padding-right: 4px;
}

.select select, .select input {
    flex: 1;
    min-width: 0;
    appearance: none;
    border: none;
    outline: none;
    background: none;
    padding: 0;
}

/* Title bar */
.titlebar {
    flex: none;
    display: flex;
    align-items: center;
    height: 23px;
    background: #474f61;
}

.quick {
    display: flex;
    align-items: center;
    width: 239px;
}

.quick .logo {
    margin-left: 4px;
}

.quick .caret {
    width: 12px;
}

.quick .caret::after {
    border-width: 4px 3px 0;
}

.quick .logo + .caret {
    margin: 0 12px 0 1px;
}

.quick .q {
    width: 24px;
}

.dim {
    opacity: .5;
}

.workspace {
    width: 179px;
    height: 21px;
    margin-bottom: 2px;
    padding-left: 3px;
    background: #3b4453;
    border: 1px solid #2a3140;
    border-top: 0;
}

.workspace svg {
    margin-right: 1px;
}

.more {
    margin-left: 4px;
}

.share {
    display: flex;
    gap: 4px;
    margin-left: 9px;
    color: #84c0ee;
}

.doc-title {
    flex: 1;
    display: flex;
    justify-content: center;
    gap: 16px;
    padding-right: 16px;
    color: #a4aab5;
}

.win-buttons {
    display: flex;
    gap: 9px;
    margin-right: 4px;
}

/* Ribbon */
.ribbon {
    flex: none;
    display: flex;
    height: 123px;
}

.ribbon-main {
    flex: 1;
    min-width: 0;
}

.tabs {
    display: flex;
    height: 24px;
    padding: 4px 0 0 3px;
    overflow: hidden;
    color: #b4b8be;
}

.tabs a {
    padding: 2px 10px;
}

.tabs .st {
    font-family: "DejaVu Sans", sans-serif;
}

.tabs .active {
    background: #3b4453;
    color: #fff;
}

.tabs-more {
    margin-left: 5px;
}

.groups {
    display: flex;
    height: 99px;
    padding: 1px 2px 2px;
    background: #3b4453;
    overflow: hidden;
}

.group {
    display: flex;
    flex-direction: column;
    padding: 0 2px;
    border-right: 1px solid #222830;
}

.group.last {
    border-right: none;
}

.group h3 {
    margin-top: auto;
    height: 17px;
    display: flex;
    justify-content: center;
    align-items: center;
}

.tools {
    display: flex;
    align-items: flex-start;
    padding-top: 7px;
}

.tool {
    flex-direction: column;
    padding: 0 3px;
}

.tool.drop {
    padding: 0 11px;
}

.tool svg {
    margin-bottom: 3px;
}

.tool.drop::after {
    margin-top: 3px;
    border-width: 4px 3px 0;
}

/* Function layout panel */
.layout-panel {
    flex: none;
    width: 280px;
}

.layout-head {
    display: flex;
    align-items: center;
    height: 24px;
    padding-top: 4px;
}

.layout-head .select {
    flex: 1;
    height: 17px;
    padding-left: 4px;
    background: #4d5a73;
}

.steel {
    color: #a8c4dc;
}

.layout-body {
    display: flex;
    flex-direction: column;
    justify-content: space-between;
    height: 99px;
    padding: 2px 1px 1px 0;
    background: #3b3b3b;
}

.lrow {
    display: flex;
    gap: 3px;
}

.lrow.wide {
    gap: 5px;
}

.lrow.tight {
    gap: 1px;
}

.lrow button {
    flex: 1;
    gap: 3px;
    height: 28px;
    background: #4b4b4b;
    border: 1px solid #606060;
}

.lrow.wide .drop {
    gap: 7px;
}

.lrow .drop::after {
    margin: 0 4px;
}

.lrow .sq {
    flex: none;
    width: 26px;
}

.lrow .blue {
    color: #4a80c8;
}

.lrow .lv {
    gap: 7px;
}

.lrow .off {
    color: #808080;
    background: #424242;
    border-color: #484848;
}

.lrow .white {
    margin-left: 1px;
}

.lrow .on {
    margin-left: 3px;
    border-color: #4370ff;
}

.wheel {
    width: 18px;
    height: 18px;
    border-radius: 50%;
    background: radial-gradient(#fff, transparent 60%), conic-gradient(#e050e0, #f04040, #f0d040, #40d040, #40d0e0, #5060f0, #e050e0);
}

/* Open drawings */
.file-tabs {
    flex: none;
    display: flex;
    height: 30px;
    padding: 4px 0 0 14px;
    border-bottom: 4px solid #3b4453;
    color: #a4a9b2;
}

.file-tabs a {
    display: flex;
    align-items: center;
    width: 123px;
    padding: 0 10px;
    background: #2e3543;
    clip-path: polygon(0 100%, 5px 80%, 8px 15%, 13px 0, calc(100% - 8px) 0, 100% 6px, 100% 100%);
}

.file-tabs .first {
    width: 131px;
    padding-left: 18px;
}

.file-tabs .active {
    width: 132px;
    background: #3b4453;
    color: #fff;
    font-weight: bold;
    clip-path: polygon(0 100%, 4px 80%, 6px 15%, 10px 0, calc(100% - 17px) 0, calc(100% - 12px) 15%, calc(100% - 5px) 85%, 100% 100%);
}

.file-tabs .x {
    margin-left: auto;
    margin-right: 11px;
    font-weight: normal;
    color: #b8bcc4;
}

.file-tabs button {
    width: 20px;
    height: 16px;
    margin-top: 4px;
    background: #2e3543;
    border-radius: 4px 8px 8px 8px;
    font-size: 14px;
}

/* Component toolbar */
.toolbar {
    flex: none;
    display: flex;
    gap: 10px;
    height: 30px;
    padding: 1px 12px 0 10px;
    background: #3b3b3b;
    border-top: 1px solid #000;
    border-bottom: 4px solid #3b4453;
}

.toolbar button {
    padding: 0 11px;
    background: #4b4b4b;
    border: 1px solid #606060;
}

.toolbar .on {
    background: #4370ff;
    border-color: #4a68c0;
}

.toolbar .focus {
    border-color: #4370ff;
}

.toolbar .order {
    display: flex;
    gap: 12px;
    padding: 0 7px 0 5px;
}

.toolbar .order button {
    gap: 6px;
    padding: 0;
    background: none;
    border: none;
}

.toolbar .bare {
    margin-left: auto;
    padding: 0;
    background: none;
    border: none;
}

/* Workspace */
.workspace-area {
    flex: 1;
    min-height: 0;
    display: flex;
    border-bottom: 1px solid #3b4453;
}

.side {
    flex: none;
    display: flex;
    flex-direction: column;
    width: 320px;
    background: #3b3b3b;
    border-right: 3px solid #3b4453;
}

.side h2 {
    height: 26px;
    padding: 3px 6px;
    background: #2e3543;
    border-top: 2px solid #3b4453;
}

.side h2::before {
    content: "";
    display: inline-block;
    width: 4px;
    height: 10px;
    margin-right: 5px;
    background: repeating-linear-gradient(#9aa0aa 0 1px, transparent 1px 2px);
}

.filters {
    display: flex;
    align-items: center;
    justify-content: space-between;
    height: 49px;
    padding: 0 1px 2px 2px;
}

.filters .select {
    height: 28px;
    padding-left: 5px;
    border: 1px solid #686868;
}

.filters .floor {
    width: 80px;
}

.filters .search {
    width: 86px;
}

.filters label {
    display: flex;
    align-items: center;
    gap: 4px;
}

.filters input::placeholder {
    color: #a8a8a8;
}

.filters input[type="radio"] {
    appearance: none;
    width: 14px;
    height: 14px;
    border: 1px solid #686868;
    border-radius: 50%;
    background: #333;
}

.filters input[type="radio"]:checked {
    background: radial-gradient(#fff 4px, #333 5px);
}

.burger {
    width: 20px;
    height: 20px;
    background: #4b4b4b;
    border: 1px solid #686868;
}

.burger::after {
    content: "";
    width: 16px;
    height: 12px;
    background: repeating-linear-gradient(#f0f0f0 0 2px, transparent 2px 5px);
}

.tree-box {
    flex: 1;
    min-height: 0;
    display: flex;
    margin-left: 1px;
    overflow: hidden;
    background: #282828;
    border-bottom: 1px solid #686868;
}

.tree {
    flex: 1;
}

.tree ul, .tree {
    list-style: none;
}

.tree li {
    position: relative;
}

.row {
    display: flex;
    align-items: center;
    height: 32px;
    padding-left: 23px;
}

.tree ul .row {
    padding-left: 43px;
}

.tree ul ul .row {
    padding-left: 63px;
}

.row .exp {
    width: 6px;
    height: 6px;
    margin: 0 10px 0 -16px;
    background: linear-gradient(135deg, transparent 50%, #f0f0f0 50%);
    z-index: 1;
}

.row svg {
    width: 16px;
    height: 16px;
    margin: 0 6px 0 5px;
}

.row .mark {
    margin: 0 1px 0 auto;
}

.row.selected {
    background: #4370ff;
    font-weight: bold;
}

.row input {
    appearance: none;
    width: 14px;
    height: 14px;
    border: 1px solid #686868;
    background: #303030;
}

.row .faint {
    border-color: #404040;
    background: #262626;
}

.row.selected input {
    background: #3a5ac0;
    border-color: #5a70b0;
}

.row input:checked::after {
    content: "";
    display: block;
    width: 4px;
    height: 8px;
    margin: 0 0 0 4px;
    border: solid #8c8c8c;
    border-width: 0 1px 1px 0;
    transform: rotate(40deg);
}

.row.selected input:checked::after {
    border-color: #c8d4ff;
}

/* connector lines */
.tree li::before, .tree li::after {
    content: "";
    position: absolute;
    left: 9px;
    background: #686868;
}

.tree li::before {
    top: 0;
    bottom: 0;
    width: 1px;
}

.tree li::after {
    top: 16px;
    width: 11px;
    height: 1px;
}

.tree > li:first-child::before {
    top: 16px;
}

.tree li:last-child::before {
    bottom: auto;
    height: 16px;
}

.tree ul li::before, .tree ul li::after {
    left: 29px;
}

.tree ul ul li::before, .tree ul ul li::after {
    left: 49px;
}

.scroll {
    display: flex;
    flex-direction: column;
    width: 17px;
    padding-left: 1px;
}

.scroll svg {
    background: #3b3b3b;
}

.thumb {
    flex: 1;
    width: 15px;
    margin-bottom: 28px;
    background: #3e3e3e;
    border: 1px solid #555;
}

.side-foot {
    flex: none;
    display: flex;
    gap: 14px;
    align-items: center;
    height: 61px;
    padding: 0 7px 2px 2px;
    border-bottom: 3px solid #3b4453;
}

.wrench {
    width: 36px;
    height: 36px;
    background: #4b4b4b;
    border-radius: 5px;
}

.split {
    display: flex;
    width: 122px;
    height: 33px;
    background: #4b4b4b;
    border: 1px solid #606060;
}

.split + .split {
    margin-left: 2px;
}

.split button {
    flex: 1;
    gap: 7px;
}

.split .up {
    flex: none;
    width: 27px;
    border-left: 1px solid #606060;
}

.stage {
    flex: 1;
    min-width: 0;
    display: flex;
    flex-direction: column;
}

.viewport {
    position: relative;
    flex: 1;
    min-height: 0;
    overflow: hidden;
    background: #212830;
}

.drawing {
    position: absolute;
    inset: 0;
}

.cube {
    position: absolute;
    top: 0;
    right: 0;
}

.compass {
    font-size: 18px;
    fill: #a8a8a4;
    text-anchor: middle;
}

.wcs {
    font-family: "Liberation Sans", sans-serif;
    font-size: 11px;
    fill: #4c5260;
}

.ucs {
    fill: #fff;
    stroke: none;
    font-family: "Open Sans", sans-serif;
    font-weight: 300;
    font-size: 19px;
    text-anchor: middle;
}

.note {
    fill: #ff0;
    stroke: none;
    font-size: 24px;
    font-weight: 500;
}

.view-label {
    position: absolute;
    top: 5px;
    left: 3px;
    font-family: "Liberation Sans", "Noto Sans CJK SC", sans-serif;
    font-size: 13px;
}

.view-buttons {
    position: absolute;
    top: 8px;
    right: 10px;
    display: flex;
    gap: 6px;
}

.view-info {
    position: absolute;
    left: 0;
    right: 0;
    bottom: 7px;
    text-align: center;
}

.view-info p {
    font-family: "Liberation Sans", "Noto Sans CJK SC", sans-serif;
    font-weight: 300;
    font-size: 18px;
    line-height: 24px;
}

/* Command line */
.command {
    flex: none;
    display: flex;
    gap: 2px;
    height: 61px;
    padding: 0 1px 0 1px;
    border-top: 2px solid #3b4453;
    background: #222830;
}

.cmd-side {
    display: flex;
    flex-direction: column;
    align-items: center;
    width: 22px;
    padding: 5px 0;
    background: #2e3543;
}

.cmd-side .close {
    margin: 5px 0 11px;
}

.grip {
    width: 17px;
    height: 5px;
    background: repeating-linear-gradient(90deg, #ddd 0 2px, transparent 2px 3px);
}

.cmd-main {
    flex: 1;
    display: flex;
    flex-direction: column;
    gap: 1px;
    padding: 1px 0 2px;
}

.cmd-main pre {
    flex: 1;
    padding: 3px 3px;
    background: #c8c8c8;
    color: #000;
    font-family: "Liberation Mono", "Noto Sans CJK SC", monospace;
    line-height: 15px;
}

.cmd-input {
    display: flex;
    align-items: center;
    gap: 6px;
    height: 20px;
    padding: 0 0 1px 4px;
    background: #fff;
    color: #000;
}

.cmd-input input {
    flex: 1;
    padding: 0;
    border: none;
    outline: none;
    font-style: italic;
}

.cmd-input input::placeholder {
    color: #808080;
}

/* Status bar */
.status {
    flex: none;
    display: flex;
    gap: 3px;
    height: 26px;
    padding-right: 2px;
    overflow: hidden;
}

.model-tabs {
    display: flex;
    align-items: flex-start;
    margin-right: auto;
    padding-left: 12px;
    color: #a4a9b2;
}

.model-tabs a {
    padding: 0 11px;
    margin-right: 1px;
    background: #2a313d;
    border-radius: 0 0 8px 8px;
}

.model-tabs .active {
    margin-right: 2px;
    background: #3b4453;
    color: #fff;
    font-weight: bold;
}

.model-tabs button {
    width: 22px;
    height: 16px;
    margin-left: 4px;
    background: #2e3543;
    border-radius: 0 0 6px 6px;
    font-size: 14px;
}

.sg {
    display: flex;
    align-items: stretch;
    background: #3b4453;
    color: #ddd;
}

.sg button {
    width: 24px;
}

.sg .caret {
    width: 16px;
}

.drafting .caret {
    width: 18px;
}

.sg svg {
    width: 24px;
    height: 24px;
}

.sg .on {
    width: 22px;
    height: 23px;
    margin: 1px 1px 0;
    background: #5d8fc6;
    color: #fff;
}

.sg .on svg {
    width: 22px;
    height: 22px;
}

.sg .cell {
    border: 1px solid #7a8088;
}

.sg .cell svg {
    width: 22px;
    height: 22px;
}

.coords {
    padding: 4px 4px 0 18px;
    color: #f4f4f4;
    white-space: nowrap;
}

.sg .txt {
    width: auto;
    padding: 0 3px;
    color: #fff;
}

.sg .scale {
    font-size: 11px;
}

.sg .slab {
    width: 22px;
    height: 18px;
    margin: 3px 1px;
    background: #c4c8e8;
    color: #3c3cc8;
    font-weight: bold;
    clip-path: polygon(4px 0, 100% 0, calc(100% - 4px) 100%, 0 100%);
}

.units {
    width: 78px;
    padding: 0 8px 0 4px;
    color: #fff;
}
```
